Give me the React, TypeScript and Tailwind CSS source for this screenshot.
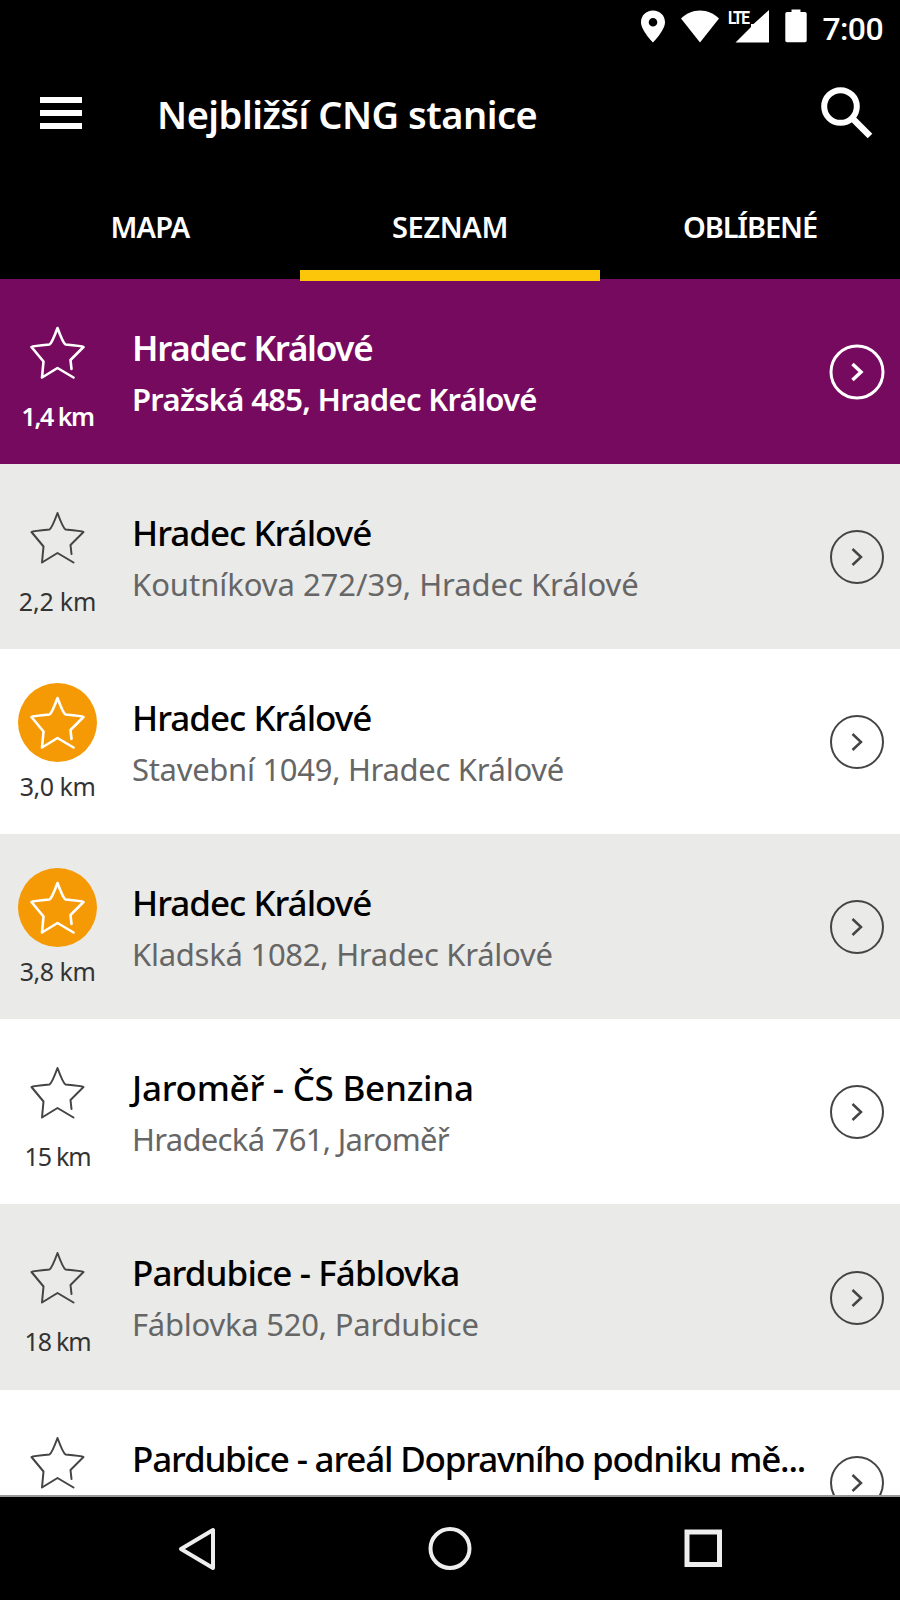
import clsx from "clsx";

type Station = {
  name: string;
  address: string;
  distance: string;
  nameClass: string;
  addressClass: string;
  distanceClass: string;
  favorite?: boolean;
  nearest?: boolean;
};

const stations: Station[] = [
  {
    name: "Hradec Králové",
    address: "Pražská 485, Hradec Králové",
    distance: "1,4 km",
    nameClass: "tracking-[-1.3px]",
    addressClass: "tracking-[-0.7px]",
    distanceClass: "tracking-[-1.5px]",
    nearest: true,
  },
  {
    name: "Hradec Králové",
    address: "Koutníkova 272/39, Hradec Králové",
    distance: "2,2 km",
    nameClass: "tracking-[-1px]",
    addressClass: "tracking-[-0.04px]",
    distanceClass: "tracking-[-0.2px]",
  },
  {
    name: "Hradec Králové",
    address: "Stavební 1049, Hradec Králové",
    distance: "3,0 km",
    nameClass: "tracking-[-1px]",
    addressClass: "tracking-[-0.3px]",
    distanceClass: "tracking-[-0.5px]",
    favorite: true,
  },
  {
    name: "Hradec Králové",
    address: "Kladská 1082, Hradec Králové",
    distance: "3,8 km",
    nameClass: "tracking-[-1px]",
    addressClass: "tracking-[-0.26px]",
    distanceClass: "tracking-[-0.5px]",
    favorite: true,
  },
  {
    name: "Jaroměř - ČS Benzina",
    address: "Hradecká 761, Jaroměř",
    distance: "15 km",
    nameClass: "tracking-[-0.25px]",
    addressClass: "tracking-[-0.7px]",
    distanceClass: "tracking-[-1.2px]",
  },
  {
    name: "Pardubice - Fáblovka",
    address: "Fáblovka 520, Pardubice",
    distance: "18 km",
    nameClass: "tracking-[-0.9px]",
    addressClass: "tracking-[-0.23px]",
    distanceClass: "tracking-[-1.2px]",
  },
  {
    name: "Pardubice - areál Dopravního podniku mě...",
    address: "",
    distance: "",
    nameClass: "tracking-[-1.2px]",
    addressClass: "",
    distanceClass: "",
  },
];

const tabs = [
  { label: "MAPA", className: "tracking-[-0.8px]" },
  { label: "SEZNAM", className: "tracking-[-0.4px]", active: true },
  { label: "OBLÍBENÉ", className: "tracking-[-1.1px]" },
];

function StatusBar() {
  return (
    <div className="flex h-[52px] items-center justify-end pr-[17px]">
      <svg width="26" height="33" viewBox="0 0 26 33" fill="#fff">
        <path
          fillRule="evenodd"
          d="M13 0.5C6 0.5 1 5.6 1 12.3C1 20.5 13 32.5 13 32.5S25 20.5 25 12.3C25 5.6 20 0.5 13 0.5ZM13 8A4.3 4.3 0 1 1 13 16.6A4.3 4.3 0 1 1 13 8Z"
        />
      </svg>
      <svg className="ml-[14px]" width="40" height="33" viewBox="0 0 40 33" fill="#fff">
        <path d="M1 8.5C6 3.5 12.5 0.5 20 0.5S34 3.5 39 8.5L20 32.5Z" />
      </svg>
      <div className="relative ml-[7px]">
        <svg width="43" height="34" viewBox="0 0 43 34" fill="#fff">
          <path d="M42 1V33.5H8.5L24 18V15H26.5Z" />
        </svg>
        <span className="absolute left-px -top-px font-['Roboto'] text-[18px] font-bold leading-[20px] tracking-[-3.4px]">
          <span className="inline-block w-[24px] origin-left scale-x-[0.86] [word-spacing:0] tracking-[-1.8px]">
            LTE
          </span>
        </span>
      </div>
      <svg className="ml-[15px]" width="22" height="34" viewBox="0 0 22 34" fill="#fff">
        <path d="M6.5 0.5H15.5V3H20Q21.7 3 21.7 4.8V31.5Q21.7 33.3 20 33.3H2Q0.3 33.3 0.3 31.5V4.8Q0.3 3 2 3H6.5Z" />
      </svg>
      <span className="ml-[15px] mt-[5px] font-['Roboto'] text-[32px] font-medium leading-none tracking-[-0.6px]">
        7:00
      </span>
    </div>
  );
}

function StarIcon({ width }: { width: number }) {
  return (
    <svg width="55" height="54" viewBox="0 0 55 54" fill="none" stroke="currentColor" strokeWidth={width}>
      <path
        strokeLinejoin="round"
        strokeLinecap="round"
        d="M43.5 51.5L27.5 42L12 51.5L13.5 35.5L1.5 21Q3 20 19.5 18.5Q22 17 27.5 2Q33 17 35.5 18.5Q52 20 53.5 21L40.5 34L41.5 43"
      />
    </svg>
  );
}

function ArrowIcon({ width }: { width: number }) {
  return (
    <svg width="56" height="56" viewBox="0 0 56 56" fill="none" stroke="currentColor" strokeWidth={width}>
      <circle cx="28" cy="28" r="26" />
      <path d="M23.5 20L32 28L23.5 36" strokeWidth={width + 0.5} />
    </svg>
  );
}

function StationRow({ station, gray }: { station: Station; gray: boolean }) {
  const { nearest, favorite } = station;

  return (
    <div
      className={clsx(
        "flex h-[185.1px] shrink-0 overflow-hidden",
        nearest ? "bg-[#760a5e] text-white" : gray ? "bg-[#eaeae8]" : "bg-white"
      )}
    >
      <div className="flex w-[115px] shrink-0 flex-col items-center pt-[34px]">
        <div
          className={clsx(
            "flex size-[79px] items-center justify-center rounded-full",
            favorite && "bg-[#f59a04] text-white",
            !favorite && !nearest && "text-[#444]"
          )}
        >
          <StarIcon width={favorite || nearest ? 2.6 : 2} />
        </div>
        <div
          className={clsx(
            "mt-[9px] whitespace-nowrap text-[25px] leading-[30px]",
            nearest ? "font-semibold" : "text-[#333]",
            station.distanceClass
          )}
        >
          {station.distance}
        </div>
      </div>

      <div className="flex-1 whitespace-nowrap pl-[17px] pt-[47px]">
        <div
          className={clsx(
            "text-[35px] leading-[44px]",
            nearest ? "font-semibold" : "font-medium",
            station.nameClass
          )}
        >
          {station.name}
        </div>
        <div
          className={clsx(
            "mt-[9px] text-[31px] leading-[40px]",
            nearest ? "font-semibold" : "text-[#666]",
            station.addressClass
          )}
        >
          {station.address}
        </div>
      </div>

      <div className={clsx("mr-[15px] mt-px flex items-center", !nearest && "text-[#444]")}>
        <ArrowIcon width={nearest ? 3 : 2} />
      </div>
    </div>
  );
}

export default function App() {
  return (
    <main className="flex h-[1600px] w-[900px] flex-col overflow-hidden bg-black font-['Noto_Sans',sans-serif]">
      {/* HEADER */}
      <header className="h-[279px] shrink-0 text-white">
        <StatusBar />

        <div className="flex h-[122px] items-center pl-[40px] pr-[26px]">
          <div className="flex w-[42px] flex-col gap-[7px]">
            <div className="h-[6px] bg-white" />
            <div className="h-[6px] bg-white" />
            <div className="h-[6px] bg-white" />
          </div>
          <h1 className="ml-[75px] mt-[2px] flex-1 text-[38px] font-semibold leading-[44px] tracking-[-0.5px]">
            Nejbližší CNG stanice
          </h1>
          <svg width="54" height="54" viewBox="0 0 54 54" fill="none" stroke="#fff" strokeWidth="6">
            <circle cx="20.5" cy="20.5" r="16.3" />
            <path d="M32 32L50 50" strokeWidth="6.5" />
          </svg>
        </div>

        <nav className="grid h-[105px] grid-cols-3">
          {tabs.map((tab) => (
            <div key={tab.label} className="relative flex items-center justify-center">
              <span className={clsx("text-[29px] font-semibold leading-[40px]", tab.className)}>
                {tab.label}
              </span>
              {tab.active && (
                <div className="absolute -bottom-[2px] left-0 z-10 h-[11px] w-full bg-[#fcc60a]" />
              )}
            </div>
          ))}
        </nav>
      </header>

      {/* LIST */}
      <div className="flex h-[1218px] shrink-0 flex-col overflow-hidden border-b-2 border-[#999] bg-white">
        {stations.map((station, i) => (
          <StationRow key={i} station={station} gray={i % 2 === 1} />
        ))}
      </div>

      {/* NAVIGATION BAR */}
      <footer className="flex flex-1 items-center justify-between pl-[177px] pr-[177px]">
        <svg width="40" height="46" viewBox="0 0 40 46" fill="none" stroke="#eee" strokeWidth="4">
          <path strokeLinejoin="round" d="M36 4V42L4 23Z" />
        </svg>
        <svg width="46" height="46" viewBox="0 0 46 46" fill="none" stroke="#eee" strokeWidth="4">
          <circle cx="23" cy="22.5" r="19.5" />
        </svg>
        <svg width="40" height="40" viewBox="0 0 40 40" fill="none" stroke="#eee" strokeWidth="5">
          <rect x="4" y="3" width="32.5" height="32.5" />
        </svg>
      </footer>
    </main>
  );
}
